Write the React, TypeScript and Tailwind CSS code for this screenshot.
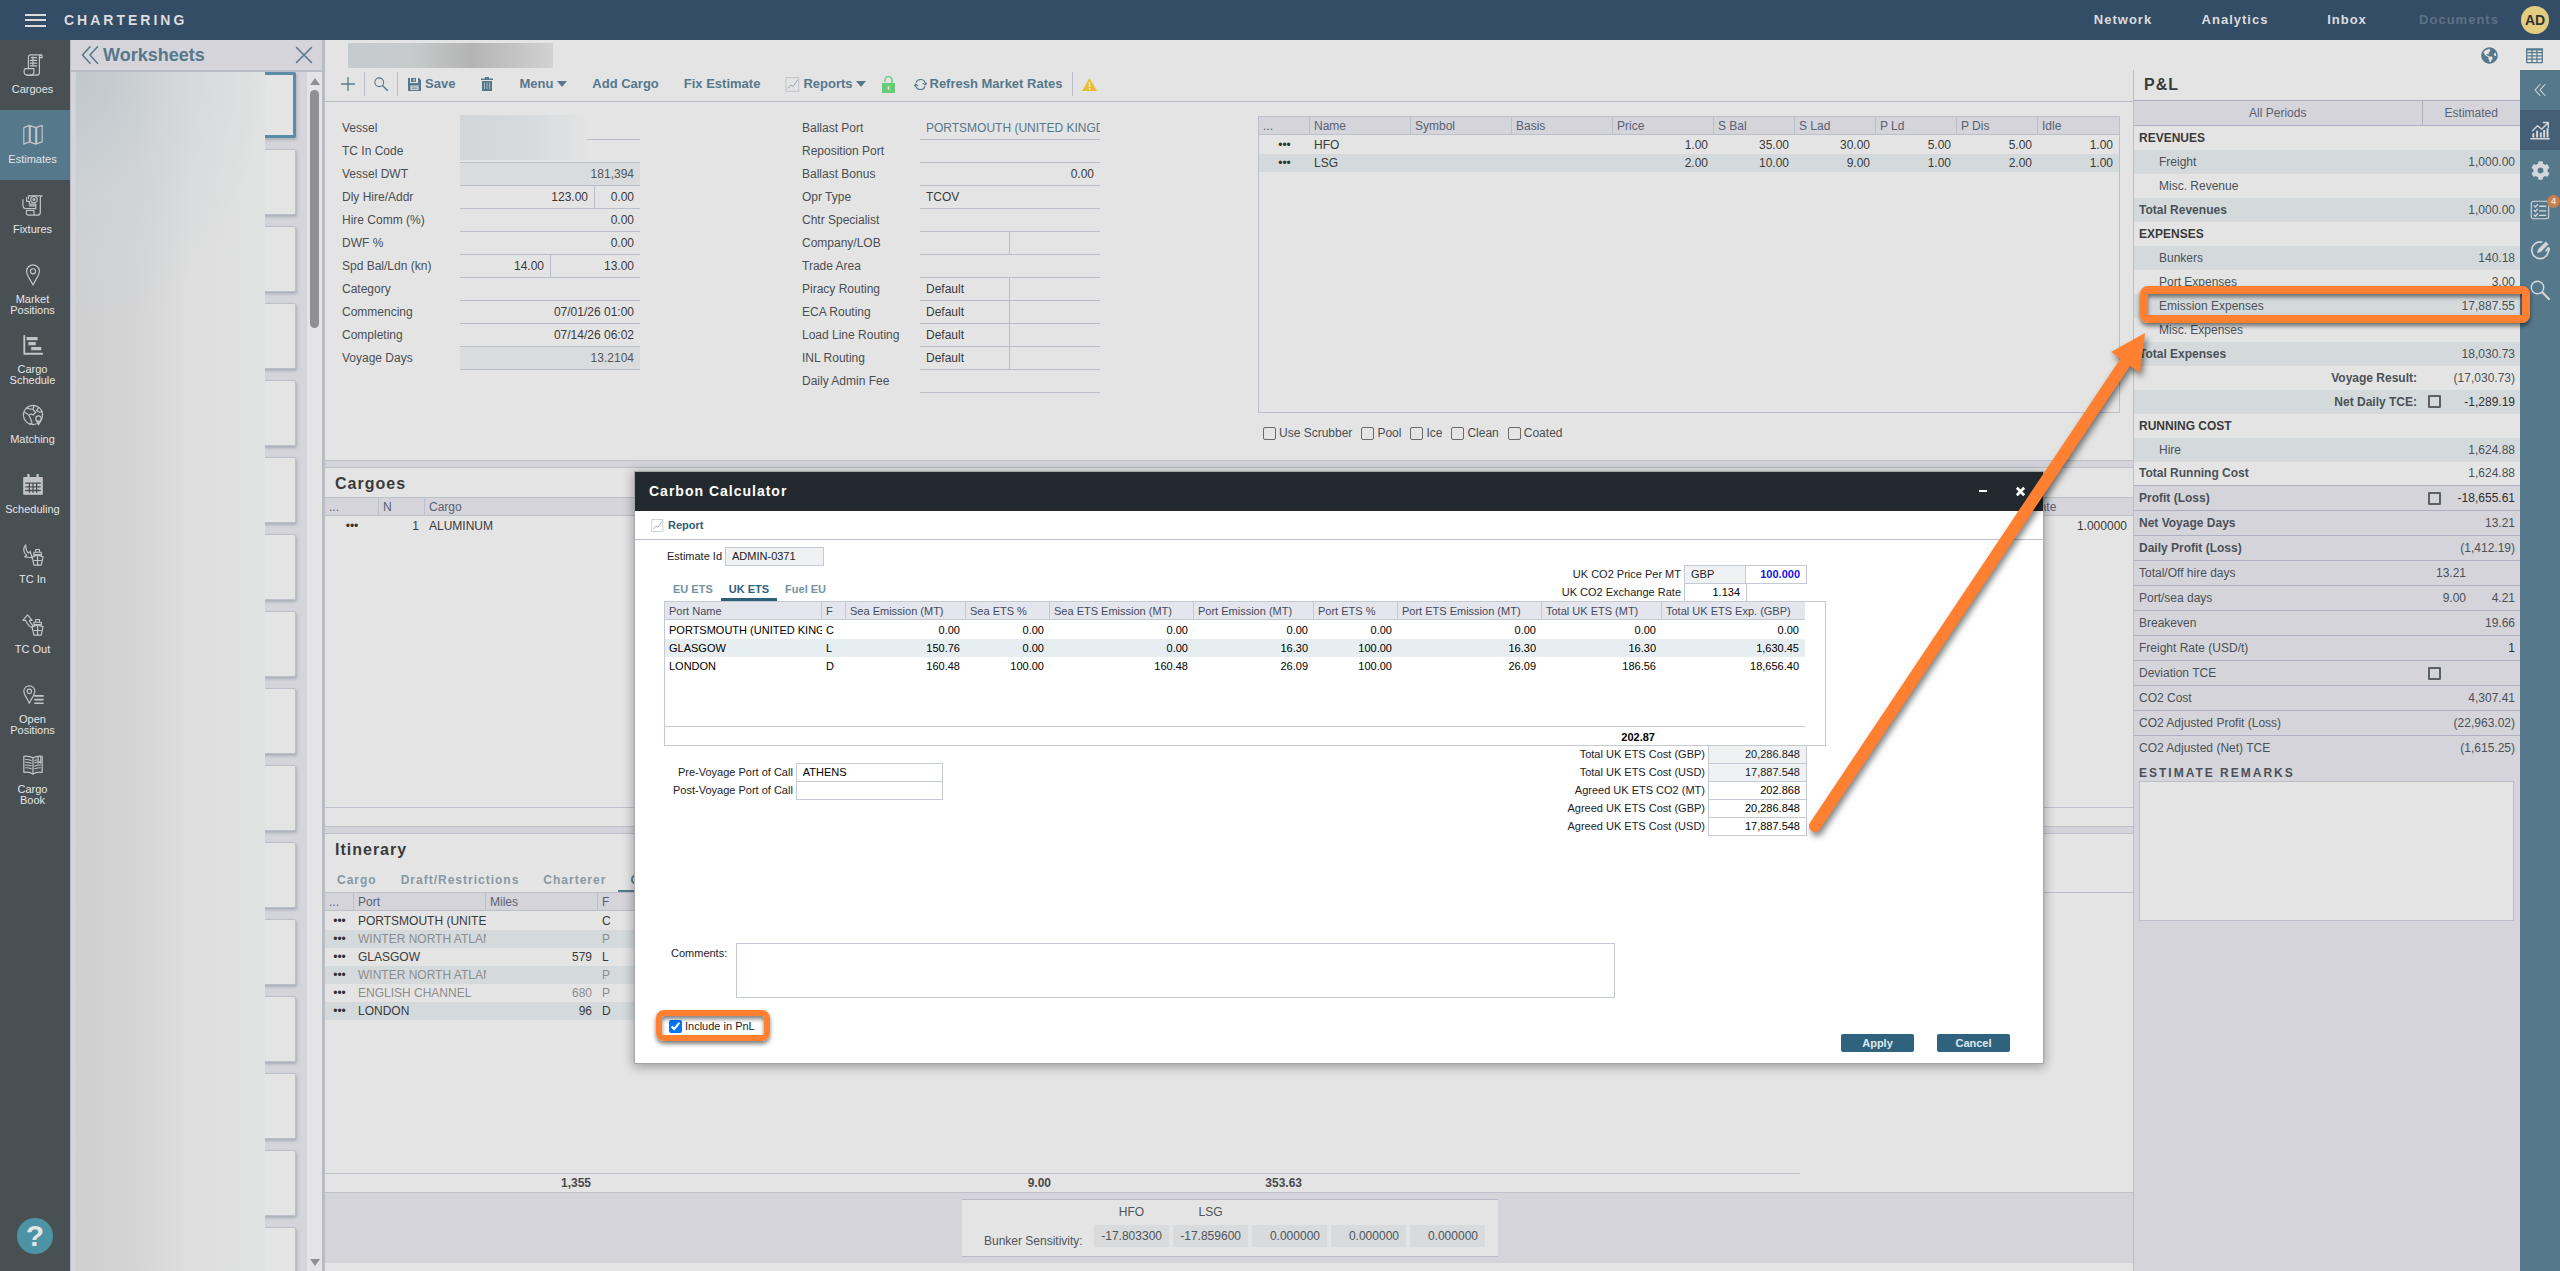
import React from "react";
import { FaGlobeAmericas, FaCog } from "react-icons/fa";

type IconProps = { className?: string; children: React.ReactNode; box?: number };

function Icon({ className = "", children, box = 24 }: IconProps) {
  return (
    <svg
      className={className}
      viewBox={`0 0 ${box} ${box}`}
      fill="none"
      stroke="currentColor"
      strokeWidth="1.3"
      strokeLinejoin="round"
      strokeLinecap="round"
      aria-hidden="true"
    >
      {children}
    </svg>
  );
}

const ship = (
  <>
    <path d="M11 14l6-2 6 2-2 9h-8z" />
    <path d="M17 12v11M13 18h8M13 13V9h8v4M15 9V6h4v3M14 11.5h6" />
  </>
);

const navItems: { label: string[]; icon: React.ReactNode; active?: boolean }[] = [
  {
    label: ["Cargoes"],
    icon: (
      <>
        <path d="M7 3v13M7 3c0-1 1-2 2-2h12c-1 0-2 1-2 2v17c0 2-1 3-2.500 3H5" />
        <path d="M3 16h10v4c0 4-8 4-10 2-1-2-1-4 0-6z" />
        <path d="M10 4h6M9 7h7M9 10h7M9 13h7M12 3v10M19 4h3V2.500C22 1 20 1 19.500 2" />
      </>
    ),
  },
  {
    label: ["Estimates"],
    active: true,
    icon: <path d="M2 4l6-2.500 7 2.500 7-2.500v18L15 22l-7-2.500L2 22zM8 1.500v18M9 2v18M15 4v18M16 4v17.500" />,
  },
  {
    label: ["Fixtures"],
    icon: (
      <>
        <path d="M7 5V2h15c-1 0-2 1-2 2v16c0 2-1 3-2.500 3H7c-2 0-3-2-2-5h8v3c0 1 1 2 2 2" />
        <circle cx="13" cy="6" r="3.500" />
        <circle cx="13" cy="6" r="1" />
        <path d="M1 6v6c0 3 2 4 4 4h10v-3H8l7 0v-2H8V8H5V4" />
      </>
    ),
  },
  {
    label: ["Market", "Positions"],
    icon: (
      <>
        <path d="M12 23C8 15 5 12 5 8a7 7 0 0 1 14 0c0 4-3 7-7 15z" />
        <circle cx="12" cy="8" r="2.800" />
      </>
    ),
  },
  {
    label: ["Cargo", "Schedule"],
    icon: (
      <>
        <path d="M2.500 2v19.500H22" strokeWidth="2" />
        <path d="M5 5h12M7 10.500h8M10 16h11" strokeWidth="3.600" strokeLinecap="butt" />
      </>
    ),
  },
  {
    label: ["Matching"],
    icon: (
      <>
        <circle cx="12" cy="12" r="10.500" />
        <path d="M5 4.500c3 0 4 2 7 1l1-3M12 6l3 3-3 3-2-1-3 1 2 3 2 6-3 1M18 4l-2 3 3 2 3-1M3 9l3 2" />
        <circle cx="18" cy="16" r="3" />
        <path d="M16 18.500l2 4 2.500-4" />
      </>
    ),
  },
  {
    label: ["Scheduling"],
    icon: (
      <>
        <path d="M2 4h20v18H2z" fill="currentColor" />
        <path d="M7 1v5M17 1v5" strokeWidth="2.500" />
        <path d="M4 10h16M4 14h16M4 18h16M8 10v10M12 10v10M16 10v10" stroke="#495054" strokeWidth="1.400" />
      </>
    ),
  },
  {
    label: ["TC In"],
    icon: (
      <>
        {ship}
        <path d="M4 1C1 4 1 9 5 12l-2 2 8 1-2-7-2 2C5 8 4 5 4 1z" />
      </>
    ),
  },
  {
    label: ["TC Out"],
    icon: (
      <>
        {ship}
        <path d="M6 1L1 7h3c1 3 3 6 7 8l1-2C10 11 9 9 8 7h3z" />
      </>
    ),
  },
  {
    label: ["Open", "Positions"],
    icon: (
      <>
        <path d="M8 21C5 14 2 12 2 8a6 6 0 0 1 12 0c0 4-3 6-6 13z" />
        <circle cx="8" cy="8" r="2.400" />
        <path d="M14 13h9M14 17h9M14 21h9" strokeWidth="1.800" />
      </>
    ),
  },
  {
    label: ["Cargo", "Book"],
    icon: (
      <>
        <path d="M12 4C8 2 5 2 2 2.500V20c4-.500 7-.500 10 2 3-2.500 6-2.500 10-2V2.500C19 2 16 2 12 4zM12 4v18" />
        <path d="M4 6c2 0 4 0 6 1M4 9c2 0 4 0 6 1M4 12c2 0 4 0 6 1M4 15c2 0 4 0 6 1M20 12c-2 0-4 0-6 1M20 15c-2 0-4 0-6 1M14 9.500l2-.500M14 7l2-.500M17.500 3v7l1.500-1.500L20.500 10V3" />
      </>
    ),
  },
];

function ReportIcon({ className = "" }: { className?: string }) {
  return (
    <Icon className={className}>
      <path d="M2 1h20v22H2z" stroke="#b9bfc6" />
      <path d="M5 18l4-5 4 2 7-10" stroke="#8a95a3" />
    </Icon>
  );
}

function Caret() {
  return (
    <svg className="h-[6px] w-[10px]" viewBox="0 0 10 6" aria-hidden="true">
      <path d="M0 0h10L5 6z" fill="currentColor" />
    </svg>
  );
}

function TopBar() {
  return (
    <header className="flex h-10 shrink-0 items-center bg-[#334d66] text-[#dcdcdf]">
      <button aria-label="Open menu" className="ml-[25px] flex h-[13px] w-[21px] flex-col justify-between">
        <span className="h-[2px] w-full bg-[#dcdcdf]" />
        <span className="h-[2px] w-full bg-[#dcdcdf]" />
        <span className="h-[2px] w-full bg-[#dcdcdf]" />
      </button>
      <h1 className="ml-[18px] text-sm font-bold tracking-[3px]">CHARTERING</h1>
      <nav className="ml-auto flex text-[13px] font-bold tracking-[1px]">
        <a href="#network" className="w-28 text-center">Network</a>
        <a href="#analytics" className="w-28 text-center">Analytics</a>
        <a href="#inbox" className="w-28 text-center">Inbox</a>
        <a href="#documents" className="w-28 text-center text-[#5f7182]">Documents</a>
      </nav>
      <button className="mr-[11px] ml-1.5 size-7 rounded-full bg-[#e3cc80] text-sm font-bold text-[#333]">AD</button>
    </header>
  );
}

function SideNav() {
  return (
    <nav className="flex w-[70px] shrink-0 flex-col bg-[#495054] text-[11px] leading-[11px] text-[#e4e4e6]">
      {navItems.map((item) => (
        <a
          key={item.label.join(" ")}
          href="#nav"
          className={`flex h-[70px] w-full flex-col items-center pt-[14px] pr-[5px] ${item.active ? "bg-[#56788b]" : ""}`}
        >
          <Icon className="size-[22px] text-[#c2c5c8]">{item.icon}</Icon>
          <span className="mt-2 text-center">
            {item.label.map((word) => (
              <span key={word} className="block">{word}</span>
            ))}
          </span>
        </a>
      ))}
      <button
        aria-label="Help"
        className="mt-auto mb-[17px] ml-[17px] size-9 rounded-full bg-[#4c93a6] text-[30px] leading-9 font-bold text-[#e4e4e4]"
      >
        ?
      </button>
    </nav>
  );
}

function Worksheets() {
  return (
    <aside className="flex w-[255px] shrink-0 flex-col border-r-[3px] border-l border-[#b9bcc5] bg-[#d4d4da]">
      <div className="flex h-8 shrink-0 items-center border-b-2 border-[#b9bcc5] text-[#56788b]">
        <button aria-label="Collapse" className="ml-[10px]">
          <Icon className="size-[18px]">
            <path d="M12 1L2 12l10 11M22 1L12 12l10 11" strokeWidth="2" />
          </Icon>
        </button>
        <h2 className="ml-1 text-lg font-bold">Worksheets</h2>
        <button aria-label="Close" className="mr-[9px] ml-auto">
          <Icon className="size-[18px]">
            <path d="M2 2l20 20M22 2L2 22" strokeWidth="2" />
          </Icon>
        </button>
      </div>
      <div className="flex min-h-0 flex-1">
        <div className="relative flex-1 overflow-hidden">
          <div className="flex flex-col gap-[11px] pr-[11px] pl-[6px]">
            {Array.from({ length: 16 }, (_, i) => (
              <div
                key={i}
                className={`h-[66px] rounded-[2px] bg-[#e4e4e4] shadow-[1px_2px_3px_#a9aeb8] ${
                  i === 0 ? "border-[3px] border-[#5b8ba6]" : "border border-[#bcc0ca]"
                }`}
              />
            ))}
          </div>
          <div className="absolute -top-0.5 bottom-0 left-[5px] w-[189px] bg-[linear-gradient(to_right,#cfcfd0,#d4d4d5_30%,#dedede_60%,#e1e2e2)]">
            <div className="h-full bg-[radial-gradient(ellipse_190px_260px_at_top_left,#bfc8cc,#ccd3d788_50%,#d8dcde00)]" />
          </div>
        </div>
        <div className="flex w-[15px] flex-col items-center bg-[#e4e4e4] text-[#909090]">
          <svg className="mt-1.5 h-[7px] w-[10px]" viewBox="0 0 10 7" aria-hidden="true">
            <path d="M5 0l5 7H0z" fill="currentColor" />
          </svg>
          <div className="mt-[5px] h-[238px] w-[9px] rounded-full bg-[#909090]" />
          <svg className="mt-auto mb-[5px] h-[7px] w-[10px]" viewBox="0 0 10 7" aria-hidden="true">
            <path d="M5 7L0 0h10z" fill="currentColor" />
          </svg>
        </div>
      </div>
    </aside>
  );
}

function Divider({ className = "" }: { className?: string }) {
  return <span className={`h-6 w-px bg-[#b9bec8] ${className}`} />;
}

function Toolbar() {
  return (
    <div className="flex h-8 shrink-0 items-center border-b border-[#b7bbc6] pb-[3px] text-[13px] font-bold text-[#56788b]">
      <button aria-label="New" className="ml-4">
        <Icon className="size-[14px]"><path d="M12 1v22M1 12h22" strokeWidth="2.200" /></Icon>
      </button>
      <Divider className="ml-[9px]" />
      <button aria-label="Search" className="ml-[9px]">
        <Icon className="size-[14px]">
          <circle cx="9" cy="9" r="7.500" strokeWidth="1.800" />
          <path d="M15 15l8 8" strokeWidth="2.500" />
        </Icon>
      </button>
      <Divider className="ml-[9px]" />
      <button className="ml-[10px] flex items-center gap-1">
        <svg className="size-[13px]" viewBox="0 0 13 13" aria-hidden="true">
          <path d="M0 0h2v5h8V0h1l2 2v11H0z" fill="currentColor" />
          <path d="M3 0h5v4H3zM5.500 .8v2.400h1.200V.8z" fill="currentColor" fillRule="evenodd" />
          <path d="M2.500 7.500h8v4.500h-8z" fill="#e4e4e4" />
          <path d="M3.500 9h6M3.500 10.700h6" stroke="currentColor" strokeWidth=".8" />
        </svg>
        Save
      </button>
      <button aria-label="Delete" className="ml-[26px]">
        <svg className="h-[14px] w-[12px]" viewBox="0 0 12 14" aria-hidden="true">
          <path d="M0 1.500h4V0h4v1.500h4V3H0zM1 4h10v10H1z" fill="currentColor" />
          <path d="M3.500 5.500v6.500M6 5.500v6.500M8.500 5.500v6.500" stroke="#b9c6cd" strokeWidth=".8" />
        </svg>
      </button>
      <button className="ml-[26px] flex items-center gap-1">
        Menu <Caret />
      </button>
      <button className="ml-[25px]">Add Cargo</button>
      <button className="ml-[25px]">Fix Estimate</button>
      <button className="ml-[25px] flex items-center gap-[3px]">
        <ReportIcon className="size-[15px]" />
        Reports <Caret />
      </button>
      <button aria-label="Unlocked" className="ml-4">
        <svg className="h-[17px] w-[13px]" viewBox="0 0 13 17" aria-hidden="true">
          <path d="M3 6V4a3.500 3.500 0 0 1 7 0v3" stroke="#6fce80" strokeWidth="1.600" fill="none" />
          <path d="M0 7h13v10H0z" fill="#66cc78" />
          <path d="M6.500 10v4" stroke="#d9efdc" strokeWidth="1.500" />
        </svg>
      </button>
      <button className="ml-[19px] flex items-center gap-[3px]">
        <Icon className="size-[13px]">
          <path d="M3 14a9 9 0 0 0 17 2M21 10A9 9 0 0 0 4 8M0 15l3-4 4 3M24 9l-3 4-4-3" strokeWidth="2" />
        </Icon>
        Refresh Market Rates
      </button>
      <Divider className="ml-[10px]" />
      <svg className="ml-[9px] h-[13px] w-[15px]" viewBox="0 0 15 13" aria-hidden="true">
        <path d="M7.500 0L15 13H0z" fill="#e8bd33" strokeLinejoin="round" />
        <path d="M7.500 4v5M7.500 10v1.500" stroke="#f4ecd0" strokeWidth="1.500" />
      </svg>
    </div>
  );
}

type Cell = { value?: string; className: string };

function FormRow({ label, cells }: { label: string; cells: Cell[] }) {
  const id = `field-${label.replace(/\W+/g, "-")}`;
  return (
    <div className="flex h-[23px]">
      <label htmlFor={id} className="w-[118px] leading-[22px] text-[#4a4f53]">{label}</label>
      <div className="flex w-[180px] border-b border-[#babec8]">
        {cells.map((cell, i) => (
          <input
            key={i}
            id={i === 0 ? id : undefined}
            aria-label={i === 0 ? undefined : `${label} ${i + 1}`}
            defaultValue={cell.value}
            className={`h-full min-w-0 border-[#babec8] px-1.5 pb-px outline-none ${cell.className}`}
          />
        ))}
      </div>
    </div>
  );
}

const R = "flex-1 text-right";
const L = "flex-1";
const RO = "flex-1 text-right bg-[#d9dbdc] text-[#54585b]";
const SPLIT = "w-[90px] border-r";

const vesselRows: [string, Cell[]][] = [
  ["Vessel", [{ className: L }]],
  ["TC In Code", [{ className: L }]],
  ["Vessel DWT", [{ value: "181,394", className: RO }]],
  ["Dly Hire/Addr", [{ value: "123.00", className: "w-[135px] border-r text-right" }, { value: "0.00", className: R }]],
  ["Hire Comm (%)", [{ value: "0.00", className: R }]],
  ["DWF %", [{ value: "0.00", className: R }]],
  ["Spd Bal/Ldn (kn)", [{ value: "14.00", className: "w-[91px] border-r text-right" }, { value: "13.00", className: R }]],
  ["Category", [{ className: L }]],
  ["Commencing", [{ value: "07/01/26 01:00", className: R }]],
  ["Completing", [{ value: "07/14/26 06:02", className: R }]],
  ["Voyage Days", [{ value: "13.2104", className: RO }]],
];

const routeRows: [string, Cell[]][] = [
  ["Ballast Port", [{ value: "PORTSMOUTH (UNITED KINGDOM)", className: "flex-1 pr-0 text-[#56788b]" }]],
  ["Reposition Port", [{ className: L }]],
  ["Ballast Bonus", [{ value: "0.00", className: R }]],
  ["Opr Type", [{ value: "TCOV", className: L }]],
  ["Chtr Specialist", [{ className: L }]],
  ["Company/LOB", [{ className: SPLIT }, { className: L }]],
  ["Trade Area", [{ className: L }]],
  ["Piracy Routing", [{ value: "Default", className: SPLIT }, { className: L }]],
  ["ECA Routing", [{ value: "Default", className: SPLIT }, { className: L }]],
  ["Load Line Routing", [{ value: "Default", className: SPLIT }, { className: L }]],
  ["INL Routing", [{ value: "Default", className: SPLIT }, { className: L }]],
  ["Daily Admin Fee", [{ className: L }]],
];

type Col = { name: string; width: string; right?: boolean };

type GridProps = {
  cols: Col[];
  rows: string[][];
  mutedRows?: number[];
  headClass?: string;
  stripe?: string;
};

function Grid({
  cols,
  rows,
  mutedRows = [],
  headClass = "bg-[#d4d4da] text-[#5b6172] border-[#bcc0ca]",
  stripe = "bg-[#d4dadc]",
}: GridProps) {
  return (
    <table className="w-full table-fixed border-separate border-spacing-0">
      <colgroup>
        {cols.map((c) => <col key={c.name} className={c.width} />)}
      </colgroup>
      <thead>
        <tr>
          {cols.map((c, i) => (
            <th
              key={c.name}
              className={`h-[18px] overflow-hidden border-b px-1 py-0 text-left leading-4 font-normal whitespace-nowrap ${headClass} ${
                i < cols.length - 1 ? "border-r" : ""
              }`}
            >
              {c.name}
            </th>
          ))}
        </tr>
      </thead>
      <tbody>
        <tr aria-hidden="true"><td className="h-px p-0" colSpan={cols.length} /></tr>
        {rows.map((row, r) => (
          <tr key={r} className={`${r % 2 ? stripe : ""} ${mutedRows.includes(r) ? "text-[#8d8d8d]" : ""}`}>
            {row.map((v, c) => (
              <td
                key={c}
                className={`h-[18px] overflow-hidden py-0 leading-[18px] whitespace-nowrap ${
                  v === "•••" ? "px-0" : "pr-1.5 pl-1"
                } ${cols[c].right ? "text-right" : ""}`}
              >
                {v === "•••" ? (
                  <button aria-label="Row menu" className="flex h-[18px] w-full items-center justify-center text-xs text-[#333]">
                    •••
                  </button>
                ) : (
                  v
                )}
              </td>
            ))}
          </tr>
        ))}
      </tbody>
    </table>
  );
}

const bunkerCols: Col[] = [
  { name: "...", width: "w-[51px]" },
  { name: "Name", width: "w-[101px]" },
  { name: "Symbol", width: "w-[101px]" },
  { name: "Basis", width: "w-[101px]" },
  { name: "Price", width: "w-[101px]", right: true },
  { name: "S Bal", width: "w-[81px]", right: true },
  { name: "S Lad", width: "w-[81px]", right: true },
  { name: "P Ld", width: "w-[81px]", right: true },
  { name: "P Dis", width: "w-[81px]", right: true },
  { name: "Idle", width: "w-[81px]", right: true },
];

function EstimateForm() {
  return (
    <section className="flex h-[358px] shrink-0 pt-[15px] pl-[17px] text-xs">
      <div className="relative w-[298px]">
        {vesselRows.map(([label, cells]) => <FormRow key={label} label={label} cells={cells} />)}
        <div className="absolute -top-0.5 left-[118px] h-[45px] w-[127px] bg-[linear-gradient(to_right,#d2d6d9,#d6dadc_50%,#e3e3e3)]" />
      </div>
      <div className="ml-[162px] w-[298px]">
        {routeRows.map(([label, cells]) => <FormRow key={label} label={label} cells={cells} />)}
      </div>
      <div className="mr-[13px] ml-auto flex w-[862px] flex-col">
        <div className="-mt-px h-[297px] border border-[#bcc0ca]">
          <Grid
            cols={bunkerCols}
            rows={[
              ["•••", "HFO", "", "", "1.00", "35.00", "30.00", "5.00", "5.00", "1.00"],
              ["•••", "LSG", "", "", "2.00", "10.00", "9.00", "1.00", "2.00", "1.00"],
            ]}
          />
        </div>
        <div className="mt-3 ml-[5px] flex gap-[9px] text-[#4a4f53]">
          {["Use Scrubber", "Pool", "Ice", "Clean", "Coated"].map((name) => (
            <label key={name} className="flex items-center gap-[3px]">
              <input type="checkbox" className="size-[13px] appearance-none rounded-[2px] border border-[#6b6b6b]" />
              {name}
            </label>
          ))}
        </div>
      </div>
    </section>
  );
}

function Band() {
  return <div className="h-2 shrink-0 border-y border-[#bcc0ca] bg-[#d4d4da]" />;
}

function Cargoes() {
  return (
    <section className="flex h-[358px] shrink-0 flex-col text-xs">
      <h2 className="h-[29px] pl-[10px] text-base leading-8 font-bold tracking-[1px] text-[#3b3b3b]">Cargoes</h2>
      <div className="h-[311px] border-y border-[#bcc0ca]">
        <Grid
          cols={[
            { name: "...", width: "w-[54px]" },
            { name: "N", width: "w-[46px]", right: true },
            { name: "Cargo", width: "w-[1602px]" },
            { name: "Rate", width: "w-[106px]", right: true },
          ]}
          rows={[["•••", "1", "ALUMINUM", "1.000000"]]}
        />
      </div>
    </section>
  );
}

function Itinerary() {
  const tab = "px-3 text-center";
  return (
    <section className="flex min-h-0 flex-1 flex-col text-xs">
      <h2 className="pl-[10px] text-base leading-8 font-bold tracking-[1px] text-[#3b3b3b]">Itinerary</h2>
      <div role="tablist" className="mt-px flex h-[26px] border-b border-[#bcc0ca] font-bold tracking-[1px] text-[#8499a6]">
        <button role="tab" className={tab}>Cargo</button>
        <button role="tab" className={tab}>Draft/Restrictions</button>
        <button role="tab" className={tab}>Charterer</button>
        <button role="tab" aria-selected="true" className={`${tab} border-b-2 border-[#56788b] pt-0.5 text-[#56788b]`}>Carbon</button>
      </div>
      <div className="w-[1475px]">
        <Grid
          mutedRows={[1, 3, 4]}
          cols={[
            { name: "...", width: "w-[29px]" },
            { name: "Port", width: "w-[132px]" },
            { name: "Miles", width: "w-[112px]", right: true },
            { name: "F", width: "w-[1202px]" },
          ]}
          rows={[
            ["•••", "PORTSMOUTH (UNITED KINGDOM)", "", "C"],
            ["•••", "WINTER NORTH ATLANTIC", "", "P"],
            ["•••", "GLASGOW", "579", "L"],
            ["•••", "WINTER NORTH ATLANTIC", "", "P"],
            ["•••", "ENGLISH CHANNEL", "680", "P"],
            ["•••", "LONDON", "96", "D"],
          ]}
        />
      </div>
      <div className="mt-auto flex h-[19px] w-[1475px] border-t border-[#bcc0ca] text-right leading-[19px] font-bold text-[#4a4a4a]">
        <span className="w-[266px]">1,355</span>
        <span className="w-[460px]">9.00</span>
        <span className="w-[251px]">353.63</span>
      </div>
    </section>
  );
}

function BunkerSensitivity() {
  const cells = [
    ["HFO", "-17.803300"],
    ["LSG", "-17.859600"],
    ["", "0.000000"],
    ["", "0.000000"],
    ["", "0.000000"],
  ];
  return (
    <section className="mb-2 flex h-[71px] shrink-0 justify-center border-t border-[#bcc0ca] bg-[#d4d4da] pt-1.5 text-xs text-[#4f5559]">
      <div className="ml-[2px] flex h-[58px] w-[536px] border-y border-[#b9b9cb] bg-[#e4e4e4]">
        <span className="mt-[33px] ml-[22px] w-[110px]">Bunker Sensitivity:</span>
        <div className="flex gap-1">
          {cells.map(([head, value], i) => (
            <label key={i} className="flex w-[75px] flex-col">
              <span className="h-[25px] text-center leading-6">{head}</span>
              <input aria-label={head || "Fuel"} defaultValue={value} className="h-[22px] w-full bg-[#d8dadc] px-[7px] text-right" />
            </label>
          ))}
        </div>
      </div>
    </section>
  );
}

type PnlRow = { label: string; value?: string; kind?: "head" | "item" | "total" | "result"; check?: boolean; strong?: boolean; mid?: string };

const pnlTop: PnlRow[] = [
  { label: "REVENUES", kind: "head" },
  { label: "Freight", value: "1,000.00", kind: "item" },
  { label: "Misc. Revenue", kind: "item" },
  { label: "Total Revenues", value: "1,000.00", kind: "total" },
  { label: "EXPENSES", kind: "head" },
  { label: "Bunkers", value: "140.18", kind: "item" },
  { label: "Port Expenses", value: "3.00", kind: "item" },
  { label: "Emission Expenses", value: "17,887.55", kind: "item" },
  { label: "Misc. Expenses", kind: "item" },
  { label: "Total Expenses", value: "18,030.73", kind: "total" },
  { label: "Voyage Result:", value: "(17,030.73)", kind: "result" },
  { label: "Net Daily TCE:", value: "-1,289.19", kind: "result", check: true, strong: true },
  { label: "RUNNING COST", kind: "head" },
  { label: "Hire", value: "1,624.88", kind: "item" },
  { label: "Total Running Cost", value: "1,624.88", kind: "total" },
];

const pnlBottom: PnlRow[] = [
  { label: "Profit (Loss)", value: "-18,655.61", kind: "total", check: true, strong: true },
  { label: "Net Voyage Days", value: "13.21", kind: "total" },
  { label: "Daily Profit (Loss)", value: "(1,412.19)", kind: "total" },
  { label: "Total/Off hire days", mid: "13.21" },
  { label: "Port/sea days", mid: "9.00", value: "4.21" },
  { label: "Breakeven", value: "19.66" },
  { label: "Freight Rate (USD/t)", value: "1", strong: true },
  { label: "Deviation TCE", check: true },
  { label: "CO2 Cost", value: "4,307.41" },
  { label: "CO2 Adjusted Profit (Loss)", value: "(22,963.02)" },
  { label: "CO2 Adjusted (Net) TCE", value: "(1,615.25)" },
];

const kindClass = {
  head: "pl-[5px] text-left font-bold text-[#3b3b3b]",
  item: "pl-[25px] text-left font-normal",
  total: "pl-[5px] text-left font-bold",
  result: "pr-[5px] text-right font-bold",
  plain: "pl-[5px] text-left font-normal",
};

function PnlLine({ row, className }: { row: PnlRow; className: string }) {
  return (
    <tr className={className}>
      <th scope="row" className={`py-0 ${kindClass[row.kind ?? "plain"]}`}>{row.label}</th>
      <td className="w-[98px] p-0 pr-[5px]">
        <div className="flex items-center">
          {row.check && (
            <input
              type="checkbox"
              aria-label={row.label}
              className="ml-[6px] size-[13px] appearance-none rounded-[1px] border-2 border-[#5a6066]"
            />
          )}
          {row.mid && <span className="w-[44px] text-right">{row.mid}</span>}
          <span className={`ml-auto ${row.strong ? "text-[#2f2f2f]" : ""}`}>{row.value}</span>
        </div>
      </td>
    </tr>
  );
}

function ProfitLoss() {
  return (
    <aside className="flex w-[387px] shrink-0 flex-col border-l border-[#bcbcca] bg-[#d4d4da] text-xs text-[#4b5157]">
      <h2 className="h-[30px] bg-[#e4e4e4] pl-[10px] text-base leading-[30px] font-bold tracking-[1px] text-[#3b3b3b]">P&amp;L</h2>
      <table className="w-full border-collapse">
        <thead>
          <tr className="h-[25px] border-y border-[#b0b0c4] text-[#5b6172]">
            <th className="border-r border-[#b0b0c4] p-0 font-normal">All Periods</th>
            <th className="w-[98px] p-0 font-normal">Estimated</th>
          </tr>
        </thead>
        <tbody>
          {pnlTop.map((row, i) => (
            <PnlLine key={i} row={row} className={`h-6 ${i % 2 ? "bg-[#d4dadc]" : "bg-[#e4e4e4]"}`} />
          ))}
          {pnlBottom.map((row, i) => (
            <PnlLine key={`b${i}`} row={row} className="h-[25px] border-t border-[#b0b0c4]" />
          ))}
        </tbody>
      </table>
      <label htmlFor="remarks" className="mt-1 pl-[5px] leading-4 font-bold tracking-[2px]">ESTIMATE REMARKS</label>
      <textarea id="remarks" className="mr-[6px] ml-[5px] h-[140px] resize-none border border-[#bcbcca] bg-[#e4e4e4]" />
    </aside>
  );
}

function ActionRail() {
  const button = "relative flex h-10 w-full items-center justify-center";
  return (
    <div className="flex w-10 shrink-0 flex-col bg-[#56788b] text-[#d3d7dc]">
      <button aria-label="Collapse panel" className={button}>
        <Icon className="size-[12px]"><path d="M12 1L2 12l10 11M22 1L12 12l10 11" strokeWidth="2.200" /></Icon>
      </button>
      <button aria-label="P&L" className={`${button} bg-[#445f76]`}>
        <Icon className="size-5">
          <path d="M1 22.500h22" strokeWidth="1.600" />
          <path d="M4 21v-5M8.500 21v-8M13 21v-6M17 21v-9M21 21V10" strokeWidth="2.400" strokeLinecap="butt" />
          <path d="M3 13l6-6 5 4 8-8M16 3h6v6" strokeWidth="1.600" />
        </Icon>
      </button>
      <button aria-label="Settings" className={button}><FaCog className="size-[19px]" /></button>
      <button aria-label="Tasks" className={button}>
        <Icon className="size-5">
          <rect x="1.500" y="1.500" width="21" height="21" rx="3" />
          <path d="M5 7l1.500 1.500L9 5.500M5 12.500L6.500 14 9 11M5 18l1.500 1.500L9 16.500M11.500 7.500H19M11.500 13H19M11.500 18.500H19" strokeWidth="1.600" />
        </Icon>
        <span className="absolute top-[5px] right-0 flex h-[13px] w-[13px] items-center justify-center rounded-full bg-[#c87f50] text-[9px] font-bold text-[#e8e0da]">
          4
        </span>
      </button>
      <button aria-label="Edit" className={button}>
        <Icon className="size-5">
          <path d="M14 2.500A10 10 0 1 0 22 11" strokeWidth="2" />
          <path d="M19 13l3-4 2.500 4" strokeWidth="1.800" />
          <path d="M9 15l1-4 9-9 3 3-9 9z" fill="currentColor" strokeWidth=".5" />
        </Icon>
      </button>
      <button aria-label="Find" className={button}>
        <Icon className="size-5">
          <circle cx="9" cy="9" r="7.500" strokeWidth="1.700" />
          <path d="M15 15l8 8" strokeWidth="2.600" />
        </Icon>
      </button>
    </div>
  );
}

const carbonCols: Col[] = [
  { name: "Port Name", width: "w-[157px]" },
  { name: "F", width: "w-[24px]" },
  { name: "Sea Emission (MT)", width: "w-[120px]", right: true },
  { name: "Sea ETS %", width: "w-[84px]", right: true },
  { name: "Sea ETS Emission (MT)", width: "w-[144px]", right: true },
  { name: "Port Emission (MT)", width: "w-[120px]", right: true },
  { name: "Port ETS %", width: "w-[84px]", right: true },
  { name: "Port ETS Emission (MT)", width: "w-[144px]", right: true },
  { name: "Total UK ETS (MT)", width: "w-[120px]", right: true },
  { name: "Total UK ETS Exp. (GBP)", width: "w-[143px]", right: true },
];

const totals = [
  { label: "Total UK ETS Cost (GBP)", value: "20,286.848", ro: true },
  { label: "Total UK ETS Cost (USD)", value: "17,887.548", ro: true },
  { label: "Agreed UK ETS CO2 (MT)", value: "202.868" },
  { label: "Agreed UK ETS Cost (GBP)", value: "20,286.848" },
  { label: "Agreed UK ETS Cost (USD)", value: "17,887.548" },
];

function CarbonCalculator() {
  const box = "border border-[#c5c9d3]";
  return (
    <div
      role="dialog"
      aria-label="Carbon Calculator"
      className="absolute top-[472px] left-[635px] w-[1408px] bg-white text-[11px] text-[#1d2226] shadow-[0_0_0_1px_#a3a6aa,0_2px_10px_2px_#00000050]"
    >
      <div className="flex h-[39px] items-center bg-[#232a2f] pb-px pl-[14px] text-white">
        <h2 className="text-sm font-bold tracking-[1px]">Carbon Calculator</h2>
        <button aria-label="Minimize" className="mr-[28px] ml-auto h-[2px] w-2 bg-white" />
        <button aria-label="Close" className="mr-[17px]">
          <Icon className="size-[11px]"><path d="M4 4l16 16M20 4L4 20" strokeWidth="6" strokeLinecap="butt" /></Icon>
        </button>
      </div>
      <div className="flex h-[29px] items-center border-b border-[#bcc0ca]">
        <button className="ml-4 flex items-center gap-1 font-bold text-[#2f5c75]">
          <ReportIcon className="size-[13px]" />
          Report
        </button>
      </div>
      <div className="px-[29px] pt-[7px]">
        <div className="flex items-center gap-[3px] pl-[3px]">
          <label htmlFor="estimate-id">Estimate Id</label>
          <input id="estimate-id" defaultValue="ADMIN-0371" className={`h-[19px] w-[99px] bg-[#eff1f3] px-1.5 pb-0.5 ${box}`} />
        </div>
        <div className="flex h-[35px] w-[1143px] items-end justify-between">
          <div role="tablist" className="flex h-6 pl-px font-bold text-[#7593a5]">
            <button role="tab" className="px-2">EU ETS</button>
            <button role="tab" aria-selected="true" className="border-b-[3px] border-[#2f607b] px-2 pt-[3px] text-[#2f607b]">UK ETS</button>
            <button role="tab" className="px-2">Fuel EU</button>
          </div>
          <div className="flex flex-col">
            <div className="flex items-center justify-end">
              <label htmlFor="co2-price" className="mr-[3px]">UK CO2 Price Per MT</label>
              <input aria-label="Currency" defaultValue="GBP" className={`h-[19px] w-[61px] border-r-0 bg-[#eff1f3] px-1.5 pb-0.5 ${box}`} />
              <input id="co2-price" defaultValue="100.000" className={`h-[19px] w-[62px] px-1.5 pb-0.5 text-right font-bold text-[#1414e6] ${box}`} />
            </div>
            <div className="flex items-center">
              <label htmlFor="co2-rate" className="mr-[3px] ml-auto">UK CO2 Exchange Rate</label>
              <input id="co2-rate" defaultValue="1.134" className="mr-[60px] h-[17px] w-[63px] border-x border-[#c5c9d3] px-1.5 pb-px text-right text-black" />
            </div>
          </div>
        </div>
        <div className={`flex h-[145px] w-[1162px] flex-col text-black ${box}`}>
          <div className="w-[1140px]">
            <Grid
              cols={carbonCols}
              headClass="bg-[#e4e5ed] text-[#454b5c] border-[#c5c9d3]"
              stripe="bg-[#e7eef1]"
              rows={[
                ["PORTSMOUTH (UNITED KINGDOM)", "C", "0.00", "0.00", "0.00", "0.00", "0.00", "0.00", "0.00", "0.00"],
                ["GLASGOW", "L", "150.76", "0.00", "0.00", "16.30", "100.00", "16.30", "16.30", "1,630.45"],
                ["LONDON", "D", "160.48", "100.00", "160.48", "26.09", "100.00", "26.09", "186.56", "18,656.40"],
              ]}
            />
          </div>
          <div className="mt-auto flex h-[19px] w-[1140px] border-t border-[#c5c9d3] leading-[21px] font-bold">
            <span className="ml-auto pr-[150px]">202.87</span>
          </div>
        </div>
        <div className="flex h-[197px] w-[1143px] items-start justify-between">
          <div className="mt-[17px] ml-[9px]">
            {[["Pre-Voyage Port of Call", "ATHENS"], ["Post-Voyage Port of Call", ""]].map(([label, value]) => (
              <div key={label} className="flex h-[18px] items-center justify-end gap-[3px]">
                <label htmlFor={label}>{label}</label>
                <input id={label} defaultValue={value} className={`-mb-px h-[19px] w-[147px] px-1.5 pb-0.5 text-black ${box}`} />
              </div>
            ))}
          </div>
          <div className="-mt-px">
            {totals.map((t) => (
              <div key={t.label} className="flex h-[18px] items-center justify-end gap-[3px]">
                <label htmlFor={t.label}>{t.label}</label>
                <input
                  id={t.label}
                  defaultValue={t.value}
                  className={`-mb-px h-[19px] w-[99px] px-1.5 pb-0.5 text-right ${t.ro ? "bg-[#eff1f3]" : "text-black"} ${box}`}
                />
              </div>
            ))}
          </div>
        </div>
        <div className="flex gap-[9px] pl-[7px]">
          <label htmlFor="comments" className="mt-[2px]">Comments:</label>
          <textarea id="comments" className={`h-[55px] w-[879px] resize-none ${box}`} />
        </div>
        <div className="flex h-[65px] items-start justify-between">
          <label className="relative mt-[20px] ml-[5px] flex items-center gap-[3px]">
            <input type="checkbox" defaultChecked className="size-[13px]" />
            Include in PnL
            <span className="absolute -top-[8px] -right-[15px] -bottom-[6px] -left-[13px] rounded-lg border-[6px] border-[#ff8030] shadow-[0_3px_4px_#00000080,inset_0_3px_4px_#00000080]" />
          </label>
          <div className="mt-9 mr-1 flex gap-[23px] font-bold text-[#dfe8ed]">
            <button className="h-[18px] w-[73px] rounded-[2px] bg-[#2f637d]">Apply</button>
            <button className="h-[18px] w-[73px] rounded-[2px] bg-[#2f637d]">Cancel</button>
          </div>
        </div>
      </div>
    </div>
  );
}

function Callout() {
  return (
    <>
      <div className="pointer-events-none absolute top-[286px] right-[30px] h-[37px] w-[390px] rounded-lg border-8 border-[#ff8030] shadow-[0_3px_4px_#00000080,inset_0_3px_4px_#00000080]" />
      <svg
        className="pointer-events-none absolute top-[320px] left-[1800px] h-[530px] w-[360px] drop-shadow-[2px_4px_3px_#00000080]"
        viewBox="0 0 360 530"
        aria-hidden="true"
      >
        <path d="M15 506L328 38" stroke="#ff8030" strokeWidth="12" strokeLinecap="round" />
        <path d="M345 13l-34 19 29 21z" fill="#ff8030" />
      </svg>
    </>
  );
}

export default function App() {
  return (
    <div className="relative flex h-screen flex-col overflow-hidden bg-[#e4e4e4] font-['Liberation_Sans',Arial,sans-serif] text-[#3a3a3a]">
      <TopBar />
      <div className="flex min-h-0 flex-1">
        <SideNav />
        <Worksheets />
        <main className="flex min-w-0 flex-1 flex-col">
          <div className="flex h-[30px] shrink-0 items-center justify-between text-[#56788b]">
            <div className="mt-px ml-[23px] h-[25px] w-[205px] bg-[linear-gradient(to_right,#c5cccf,#c8cbcc_30%,#b4b4b4_60%,#d2d2d2)]" />
            <div className="mr-[17px] flex items-center gap-7">
              <FaGlobeAmericas className="size-[17px]" />
              <Icon className="size-[17px]">
                <path d="M1 3h22v19H1zM1 8h22M1 12.500h22M1 17h22M8.500 3v19M15.500 3v19" strokeWidth="1.800" />
                <path d="M1 3.500h22" strokeWidth="3" />
              </Icon>
            </div>
          </div>
          <div className="flex min-h-0 flex-1">
            <div className="flex min-w-0 flex-1 flex-col">
              <Toolbar />
              <EstimateForm />
              <Band />
              <Cargoes />
              <Band />
              <Itinerary />
              <BunkerSensitivity />
            </div>
            <ProfitLoss />
            <ActionRail />
          </div>
        </main>
      </div>
      <CarbonCalculator />
      <Callout />
    </div>
  );
}
